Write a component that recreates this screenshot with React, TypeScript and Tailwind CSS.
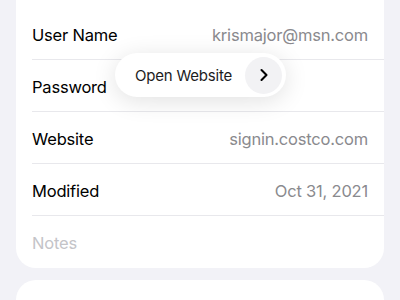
import { ChevronRight } from 'lucide-react';

const rows = [
  { label: 'User Name', value: 'krismajor@msn.com' },
  { label: 'Password', value: '' },
  { label: 'Website', value: 'signin.costco.com' },
  { label: 'Modified', value: 'Oct 31, 2021' },
];

export default function App() {
  return (
    <div
      className="relative h-[300px] w-[400px] overflow-hidden bg-[#f2f2f7]"
      style={{ fontFamily: 'Inter, "Liberation Sans", sans-serif' }}
    >
      <div className="-mt-5 px-4">
        {/* Detail card */}
        <div className="rounded-[20px] bg-white pl-4 pt-[28px]">
          {rows.map((row) => (
            <div
              key={row.label}
              className="flex h-[52px] items-center justify-between border-b border-[#e8e8ec] pr-4 pt-[3px]"
            >
              <span className="text-[16.5px] tracking-[-0.2px] text-black">{row.label}</span>
              <span className="text-[16.5px] tracking-[-0.2px] text-[#8a8a8e]">{row.value}</span>
            </div>
          ))}
          <div className="flex h-[52px] items-center pt-[3px]">
            <span className="text-[16.5px] tracking-[-0.2px] text-[#c4c4c8]">Notes</span>
          </div>
        </div>

        {/* Next card */}
        <div className="mt-3 h-[60px] rounded-[20px] bg-white" />
      </div>

      {/* Open Website popover */}
      <div className="absolute left-[115px] top-[53px] flex h-[44px] items-center gap-[13px] rounded-full bg-white pl-5 pr-[4px] shadow-[0_4px_24px_rgba(0,0,0,0.12)]">
        <span className="pt-[2px] text-[15px] tracking-[-0.2px] text-[#1c1c1e]">Open Website</span>
        <div className="flex h-[37px] w-[37px] items-center justify-center rounded-full bg-[#f2f2f4]">
          <ChevronRight className="h-5 w-5 text-black" strokeWidth={2.5} />
        </div>
      </div>
    </div>
  );
}
